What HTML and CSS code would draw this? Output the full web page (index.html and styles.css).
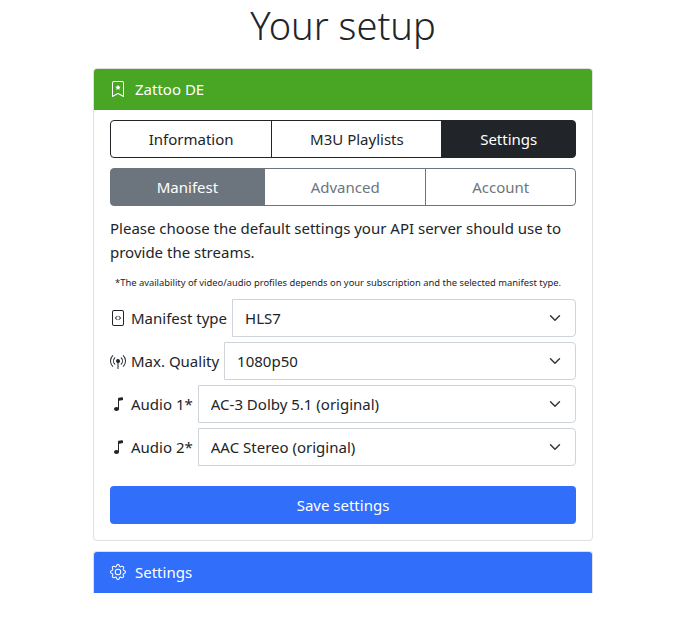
FILE: index.html
```html
<!DOCTYPE html>
<html lang="en">
<head>
  <meta charset="UTF-8" />
  <meta name="viewport" content="width=device-width, initial-scale=1.0" />
  <title>Your setup</title>
  <link rel="stylesheet" href="styles.css">
</head>
<body>
  <h1>Your setup</h1>

  <div class="card">
    <div class="card-header green">
      <svg class="icon" viewBox="0 0 16 16"><path d="M7.84 4.1a.178.178 0 0 1 .32 0l.634 1.285a.178.178 0 0 0 .134.098l1.42.206c.145.021.204.2.098.303L9.42 6.993a.178.178 0 0 0-.051.158l.242 1.414a.178.178 0 0 1-.258.187l-1.27-.668a.178.178 0 0 0-.165 0l-1.27.668a.178.178 0 0 1-.257-.187l.242-1.414a.178.178 0 0 0-.05-.158l-1.03-1.001a.178.178 0 0 1 .098-.303l1.42-.206a.178.178 0 0 0 .134-.098L7.84 4.1z"/><path d="M2 2a2 2 0 0 1 2-2h8a2 2 0 0 1 2 2v13.5a.5.5 0 0 1-.777.416L8 13.101l-5.223 2.815A.5.5 0 0 1 2 15.5V2zm2-1a1 1 0 0 0-1 1v12.566l4.723-2.482a.5.5 0 0 1 .554 0L13 14.566V2a1 1 0 0 0-1-1H4z"/></svg>
      <span>Zattoo DE</span>
    </div>
    <div class="card-body">
      <div class="btn-group dark">
        <button>Information</button>
        <button>M3U Playlists</button>
        <button class="active">Settings</button>
      </div>
      <div class="btn-group grey">
        <button class="active">Manifest</button>
        <button>Advanced</button>
        <button>Account</button>
      </div>

      <p class="intro">Please choose the default settings your API server should use to provide the streams.</p>
      <p class="note">*The availability of video/audio profiles depends on your subscription and the selected manifest type.</p>

      <div class="input-group">
        <label>
          <span class="label-icon"><svg class="icon" viewBox="0 0 16 16"><path d="M6.9 5.9a.4.4 0 1 1 .6.6L6 8l1.500 1.500a.4.4 0 0 1-.6.6L5 8.300a.4.4 0 0 1 0-.6l1.900-1.800zm2.200 0a.4.4 0 1 0-.6.6L10 8l-1.500 1.500a.4.4 0 0 0 .6.6L11 8.300a.4.4 0 0 0 0-.6L9.100 5.900z"/><path d="M2 2a2 2 0 0 1 2-2h8a2 2 0 0 1 2 2v12a2 2 0 0 1-2 2H4a2 2 0 0 1-2-2V2zm10-1H4a1 1 0 0 0-1 1v12a1 1 0 0 0 1 1h8a1 1 0 0 0 1-1V2a1 1 0 0 0-1-1z"/></svg></span>
          Manifest type
        </label>
        <select><option>HLS7</option></select>
      </div>
      <div class="input-group">
        <label>
          <span class="label-icon"><svg class="icon" viewBox="0 0 16 16"><path d="M3.050 3.050a7 7 0 0 0 0 9.900.5.5 0 0 1-.707.707 8 8 0 0 1 0-11.314.5.5 0 0 1 .707.707zm2.122 2.122a4 4 0 0 0 0 5.656.5.5 0 1 1-.708.708 5 5 0 0 1 0-7.072.5.5 0 0 1 .708.708zm5.656-.708a.5.5 0 0 1 .708 0 5 5 0 0 1 0 7.072.5.5 0 1 1-.708-.708 4 4 0 0 0 0-5.656.5.5 0 0 1 0-.708zm2.122-2.120a.5.5 0 0 1 .707 0 8 8 0 0 1 0 11.313.5.5 0 0 1-.707-.707 7 7 0 0 0 0-9.900.5.5 0 0 1 0-.707zM6 8a2 2 0 1 1 2.500 1.937V15.500a.5.5 0 0 1-1 0V9.937A2 2 0 0 1 6 8z"/></svg></span>
          Max. Quality
        </label>
        <select><option>1080p50</option></select>
      </div>
      <div class="input-group">
        <label>
          <span class="label-icon"><svg class="icon" viewBox="0 0 16 16"><path d="M9 13c0 1.105-1.120 2-2.500 2S4 14.105 4 13s1.120-2 2.500-2 2.500.895 2.500 2z"/><path d="M9 3v10H8V3h1z"/><path d="M8 2.820a1 1 0 0 1 .804-.980l3-.6A1 1 0 0 1 13 2.220V4L8 5V2.820z"/></svg></span>
          Audio 1*
        </label>
        <select><option>AC-3 Dolby 5.1 (original)</option></select>
      </div>
      <div class="input-group">
        <label>
          <span class="label-icon"><svg class="icon" viewBox="0 0 16 16"><path d="M9 13c0 1.105-1.120 2-2.500 2S4 14.105 4 13s1.120-2 2.500-2 2.500.895 2.500 2z"/><path d="M9 3v10H8V3h1z"/><path d="M8 2.820a1 1 0 0 1 .804-.980l3-.6A1 1 0 0 1 13 2.220V4L8 5V2.820z"/></svg></span>
          Audio 2*
        </label>
        <select><option>AAC Stereo (original)</option></select>
      </div>

      <button class="save">Save settings</button>
    </div>
  </div>

  <div class="card last">
    <div class="card-header blue">
      <svg class="icon" viewBox="0 0 16 16"><path d="M8 4.754a3.246 3.246 0 1 0 0 6.492 3.246 3.246 0 0 0 0-6.492zM5.754 8a2.246 2.246 0 1 1 4.492 0 2.246 2.246 0 0 1-4.492 0z"/><path d="M9.796 1.343c-.527-1.790-3.065-1.790-3.592 0l-.094.319a.873.873 0 0 1-1.255.520l-.292-.160c-1.640-.892-3.433.902-2.540 2.541l.159.292a.873.873 0 0 1-.520 1.255l-.319.094c-1.790.527-1.790 3.065 0 3.592l.319.094a.873.873 0 0 1 .520 1.255l-.160.292c-.892 1.640.901 3.434 2.541 2.540l.292-.159a.873.873 0 0 1 1.255.520l.094.319c.527 1.790 3.065 1.790 3.592 0l.094-.319a.873.873 0 0 1 1.255-.520l.292.160c1.640.893 3.434-.902 2.540-2.541l-.159-.292a.873.873 0 0 1 .520-1.255l.319-.094c1.790-.527 1.790-3.065 0-3.592l-.319-.094a.873.873 0 0 1-.520-1.255l.160-.292c.893-1.640-.902-3.433-2.541-2.540l-.292.159a.873.873 0 0 1-1.255-.520l-.094-.319zm-2.633.283c.246-.835 1.428-.835 1.674 0l.094.319a1.873 1.873 0 0 0 2.693 1.115l.291-.160c.764-.415 1.600.420 1.184 1.185l-.159.292a1.873 1.873 0 0 0 1.116 2.692l.318.094c.835.246.835 1.428 0 1.674l-.319.094a1.873 1.873 0 0 0-1.115 2.693l.160.291c.415.764-.420 1.600-1.185 1.184l-.291-.159a1.873 1.873 0 0 0-2.693 1.116l-.094.318c-.246.835-1.428.835-1.674 0l-.094-.319a1.873 1.873 0 0 0-2.692-1.115l-.292.160c-.764.415-1.600-.420-1.184-1.185l.159-.291A1.873 1.873 0 0 0 1.945 8.930l-.319-.094c-.835-.246-.835-1.428 0-1.674l.319-.094A1.873 1.873 0 0 0 3.060 4.377l-.160-.292c-.415-.764.420-1.600 1.185-1.184l.292.159a1.873 1.873 0 0 0 2.692-1.115l.094-.319z"/></svg>
      <span>Settings</span>
    </div>
  </div>
</body>
</html>
```

FILE: styles.css
```css
* {
  box-sizing: border-box;
}

body {
  font-family: "Noto Sans", sans-serif;
  font-size: 15px;
  line-height: 24px;
  color: #212529;
  background-color: #fff;
  margin: 0;
  padding-left: 12px;
  height: 639px;
  overflow: hidden;
}

h1 {
  text-align: center;
  font-size: 38px;
  font-weight: 300;
  line-height: 50px;
  margin: 0 0 18px;
}

.card {
  width: 500px;
  margin: 0 auto 10px;
  background: white;
  border: 1px solid #dfdfdf;
  border-radius: 4px;
}

.card.last {
  border-bottom: none;
  border-radius: 4px 4px 0 0;
}

.card-header {
  display: flex;
  align-items: center;
  gap: 9px;
  height: 41px;
  padding: 0 16px 2px;
  color: white;
  border-radius: 3px 3px 0 0;
}

.green {
  background-color: #49a625;
}

.blue {
  background-color: #316ffb;
}

.icon {
  width: 16px;
  height: 16px;
  fill: currentColor;
  display: block;
}

.card-body {
  padding: 10px 16px 16px;
}

.btn-group {
  display: flex;
  margin-bottom: 10px;
}

.btn-group button {
  flex: 1 1 auto;
  height: 38px;
  padding: 0 12px;
  font: inherit;
  background: white;
  border: 1px solid;
  margin-left: -1px;
}

.btn-group button:first-child {
  margin-left: 0;
  border-radius: 4px 0 0 4px;
}

.btn-group button:last-child {
  border-radius: 0 4px 4px 0;
}

.dark button {
  border-color: #212529;
  color: #212529;
}

.dark button.active {
  background-color: #212529;
  color: white;
}

.grey button {
  border-color: #6c757d;
  color: #6c757d;
}

.grey button.active {
  background-color: #6c757d;
  color: white;
}

.intro {
  margin: 10px 0 0;
}

.note {
  font-size: 9.4px;
  line-height: 14px;
  margin: 12px 0 9px 5px;
  white-space: nowrap;
}

.input-group {
  display: flex;
  height: 38px;
  margin-bottom: 5px;
}

.input-group label {
  display: flex;
  align-items: center;
  white-space: nowrap;
  margin-right: 5px;
}

.label-icon {
  width: 16px;
  margin-right: 5px;
  display: flex;
  justify-content: center;
}

.input-group select {
  flex: 1;
  min-width: 0;
  font: inherit;
  color: #212529;
  padding: 0 36px 0 12px;
  background: white url("data:image/svg+xml,%3csvg xmlns='http://www.w3.org/2000/svg' viewBox='0 0 16 16'%3e%3cpath fill='none' stroke='%23343a40' stroke-linecap='round' stroke-linejoin='round' stroke-width='2' d='M2 5l6 6 6-6'/%3e%3c/svg%3e") no-repeat right 14px center / 12px;
  border: 1px solid #ced4da;
  border-radius: 0 4px 4px 0;
  appearance: none;
}

.save {
  display: block;
  width: 100%;
  height: 38px;
  margin-top: 20px;
  padding-bottom: 2px;
  font: inherit;
  color: white;
  background-color: #316ffb;
  border: none;
  border-radius: 4px;
}
```
